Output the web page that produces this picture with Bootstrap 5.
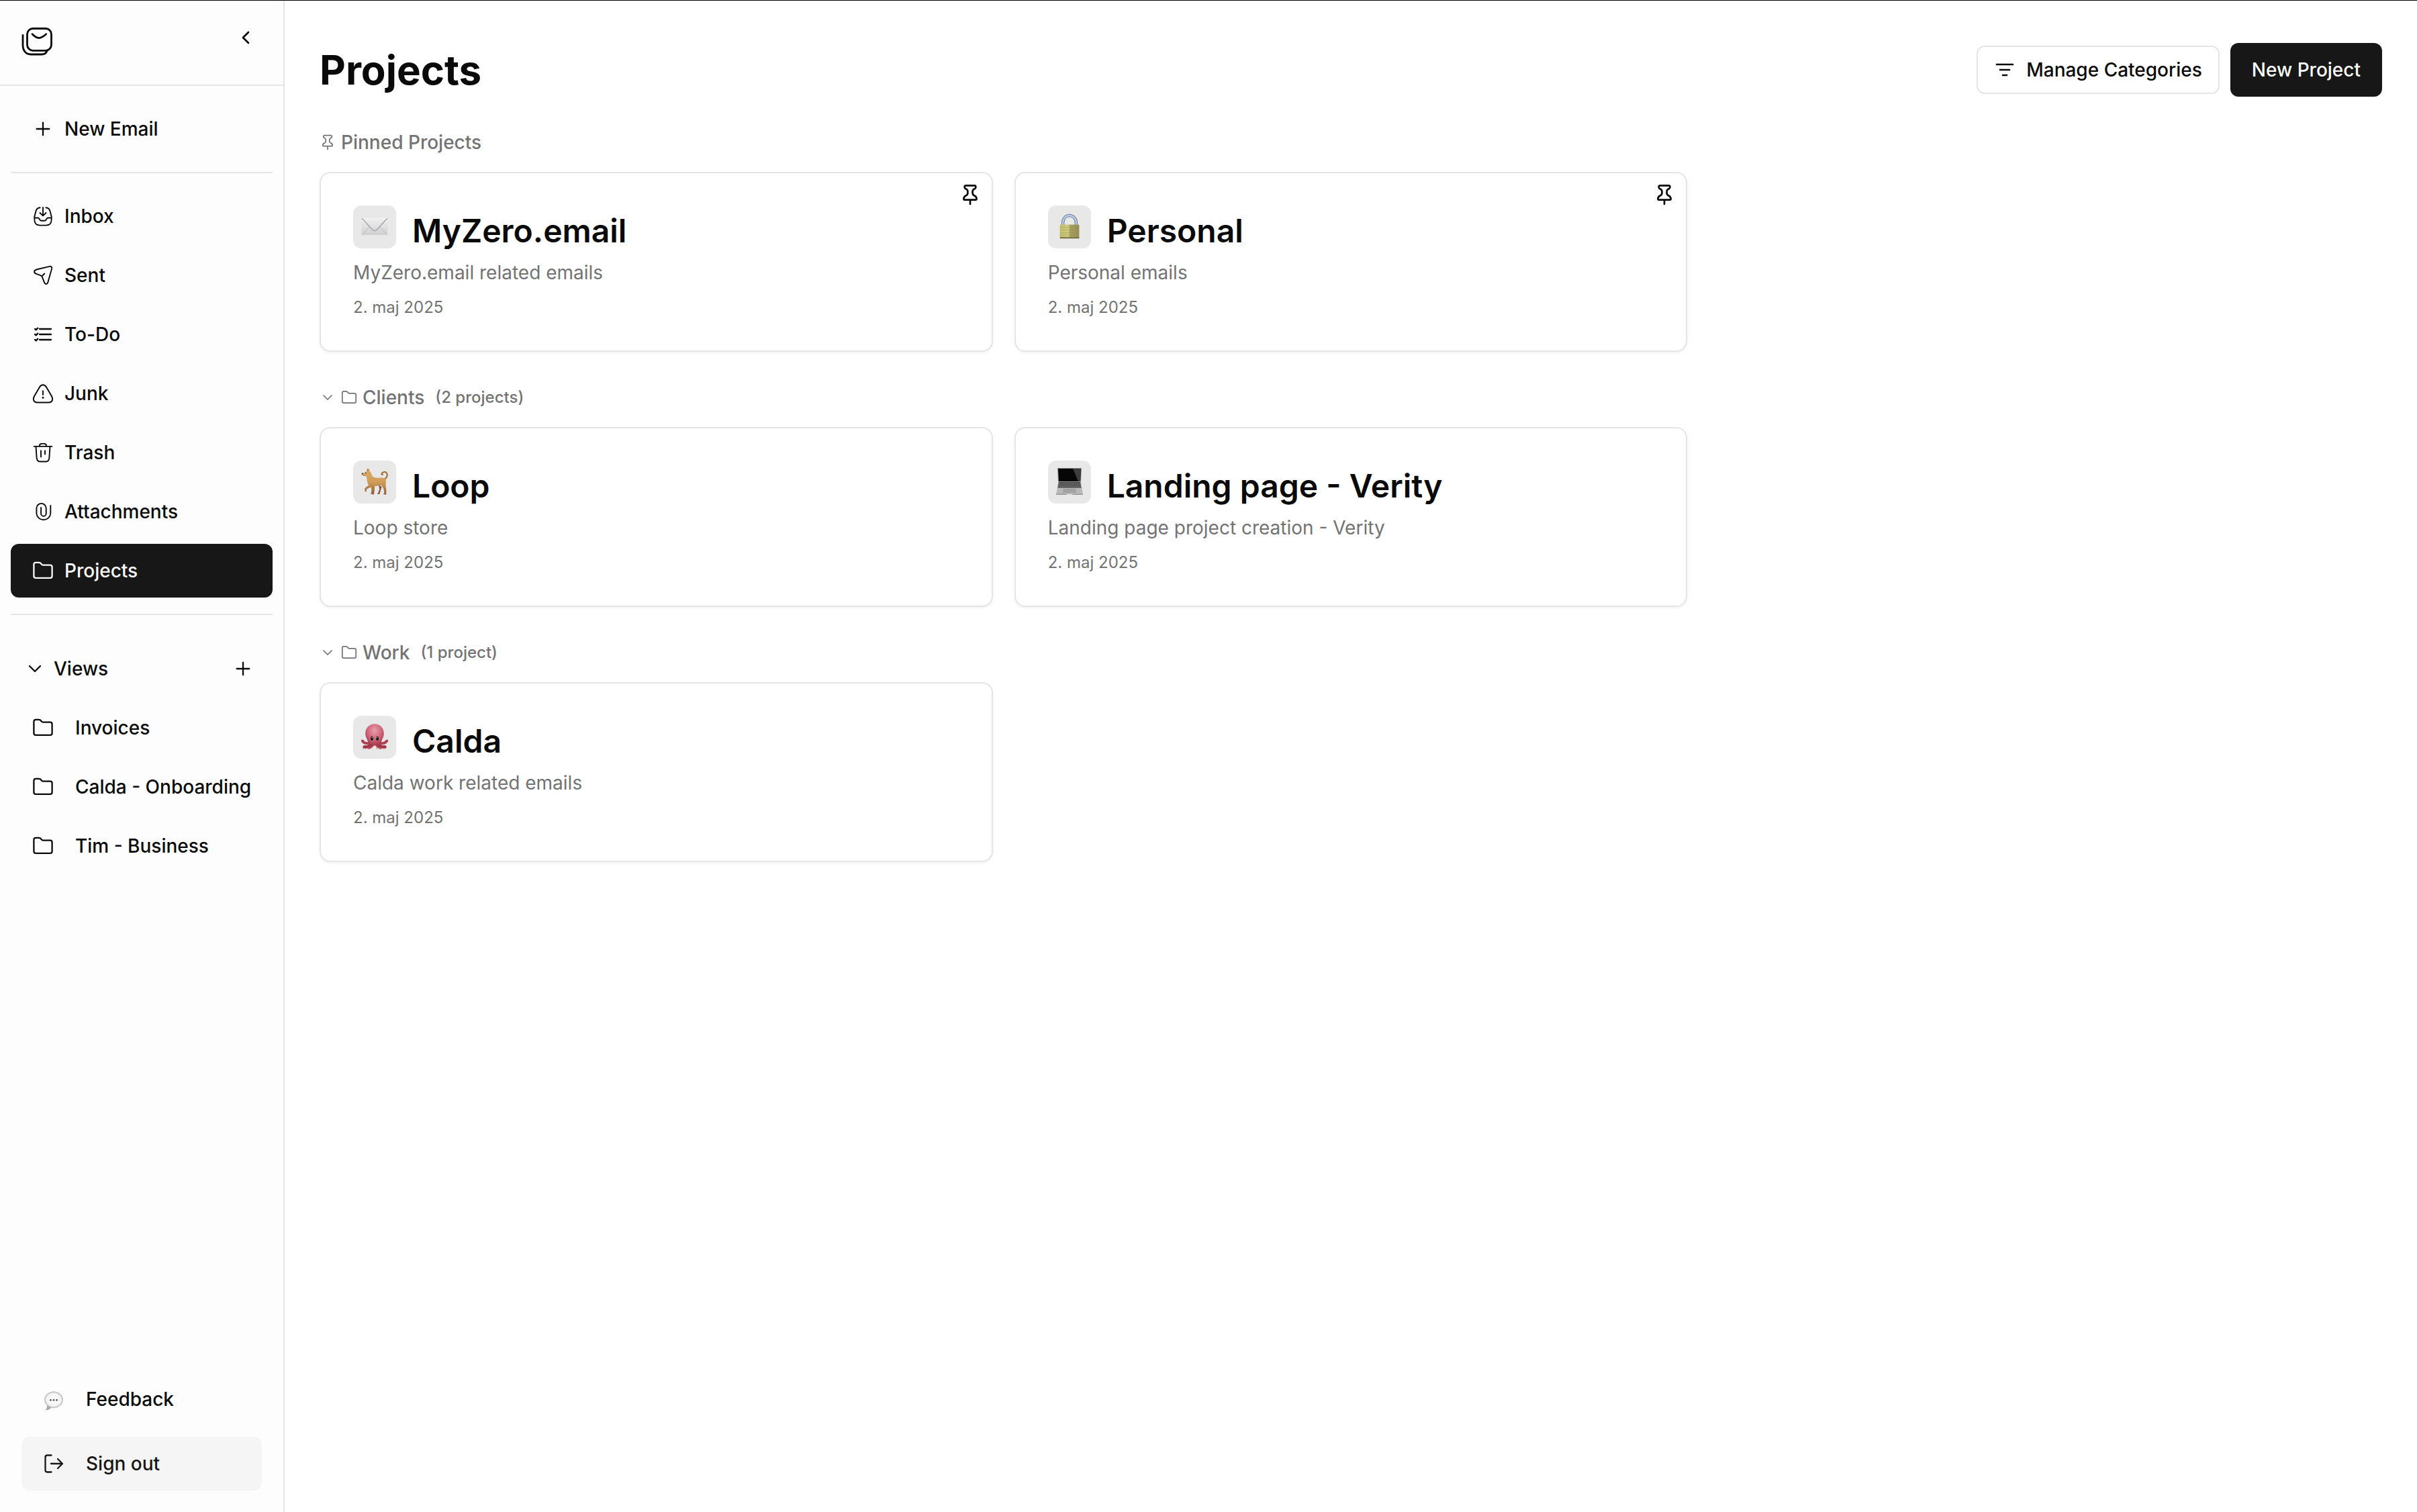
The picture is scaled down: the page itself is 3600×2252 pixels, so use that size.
<!DOCTYPE html>
<html lang="en">
<head>
<meta charset="utf-8">
<meta name="viewport" content="width=device-width, initial-scale=1">
<title>Projects</title>
<link href="https://cdn.jsdelivr.net/npm/bootstrap@5.3.0/dist/css/bootstrap.min.css" rel="stylesheet">
<style>
  :root { --ink: #0a0a0a; --muted: #737373; --line: #e5e5e5; --solid: #171717; }
  body { font-family: Inter, "Noto Sans", sans-serif; font-size: 28px; line-height: 40px; color: var(--ink); background: #fff; }
  svg { flex: none; display: block; overflow: visible; }
  .ico { width: 32px; height: 32px; fill: none; stroke: currentColor; stroke-width: 2.3; stroke-linecap: round; stroke-linejoin: round; }
  .ico-fine { stroke-width: 1.9; }
  .ico-bold { stroke-width: 2.7; }
  .ico-small { width: 24px; height: 24px; }
  .app-shell { border-top: 1px solid #000; }
  .side-pane { width: 424px; background: #fdfdfd; border-right: 2px solid var(--line); }
  .side-head { height: 127px; padding: 32px 40px 32px 32px; border-bottom: 2px solid var(--line); }
  .side-head button { margin-top: 7px; }
  .side-body { padding: 24px 16px; }
  .side-rule { height: 2px; margin: 24px 0; background: var(--line); }
  .side-list { gap: 8px; }
  .side-item { display: flex; align-items: center; gap: 16px; width: 100%; height: 80px; padding: 0 32px; border: 0; border-radius: 12px; background: none; color: var(--ink); font-weight: 500; text-decoration: none; white-space: nowrap; text-align: left; }
  .side-item.active { background: var(--solid); color: #fafafa; }
  .views-head { height: 80px; margin-top: 40px; padding: 0 28px 0 20px; font-weight: 500; }
  .view-item { gap: 32px; }
  .plain-btn { display: flex; align-items: center; gap: 12px; padding: 0; border: 0; background: none; color: inherit; font-weight: 500; }
  .side-foot { padding: 32px; gap: 16px; }
  .side-foot .side-item { gap: 32px; }
  .side-out { background: #f5f5f5; color: var(--solid); }
  .content-pane { padding: 63px 52px; }
  .page-title { font-size: 60px; line-height: 80px; font-weight: 700; }
  .btn-outline-plain, .btn-solid { display: flex; align-items: center; gap: 16px; font-size: 28px; font-weight: 500; line-height: 40px; border-radius: 12px; }
  .btn-outline-plain { height: 72px; padding: 0 24px; border: 2px solid var(--line); background: #fff; color: var(--ink); }
  .btn-solid { height: 80px; padding: 0 32px; border: 0; background: var(--solid); color: #fafafa; }
  .btn-solid:hover { background: #333; color: #fafafa; }
  .group-block { margin-top: 48px; }
  .group-head { gap: 8px; margin-bottom: 24px; font-size: 28px; line-height: 40px; font-weight: 500; color: var(--muted); }
  .group-head button { gap: 8px; }
  .group-count { margin-left: 8px; font-size: 24px; }
  .card-row { --bs-gutter-x: 32px; --bs-gutter-y: 32px; }
  .project-card { padding: 48px; border: 2px solid var(--line); border-radius: 16px; color: var(--ink); box-shadow: 0 2px 4px rgba(0,0,0,.05); }
  .project-head { gap: 24px; margin-bottom: 4px; }
  .emoji-tile { width: 64px; height: 64px; border-radius: 12px; background: #e8e8e8; }
  .project-name { margin: 0; font-size: 48px; line-height: 76px; font-weight: 600; }
  .project-note { margin: 0 0 16px; color: var(--muted); }
  .project-date { font-size: 24px; line-height: 32px; color: var(--muted); }
  .pin-btn { top: 16px; right: 16px; }
</style>
</head>
<body>
<svg width="0" height="0" class="position-absolute" aria-hidden="true">
  <defs>
    <symbol id="plus" viewBox="0 0 32 32"><path d="M6.7 16h18.6M16 6.700v18.600"/></symbol>
    <symbol id="down" viewBox="0 0 32 32"><path d="M8 12l8 8 8-8"/></symbol>
    <symbol id="folder" viewBox="0 0 32 32"><path d="M2.400 6.700Q2.400 3.800 5.300 3.800H9.700C11.400 3.800 12.400 4.300 13.200 5.600C14 7 14.900 7.700 16.400 7.700H26.700Q29.600 7.700 29.600 10.600V24Q29.600 26.900 26.700 26.900H5.300Q2.400 26.900 2.400 24Z"/></symbol>
    <symbol id="pin" viewBox="0 0 32 32"><path d="M9.600 2.300H22.400Q24.300 2.300 24.300 4.200V5Q24.300 6.600 22.700 7.200Q19.600 8.300 19.600 11V13.500Q19.600 16 22 17.200Q25.600 18.800 25.600 22.200Q25.600 23.600 24.200 23.600H7.800Q6.400 23.600 6.400 22.200Q6.400 18.800 10 17.200Q12.400 16 12.400 13.500V11Q12.400 8.300 9.300 7.200Q7.700 6.600 7.700 5V4.200Q7.700 2.300 9.600 2.300ZM16 23.600V30"/></symbol>
    <linearGradient id="paper" x1="0" y1="0" x2="0" y2="1"><stop offset="0" stop-color="#f1f1f1"/><stop offset="1" stop-color="#cfcfcf"/></linearGradient>
    <linearGradient id="brass" x1="0" y1="0" x2="1" y2="0"><stop offset="0" stop-color="#c3bb6c"/><stop offset=".45" stop-color="#cfc880"/><stop offset=".52" stop-color="#a9a062"/><stop offset="1" stop-color="#979056"/></linearGradient>
    <linearGradient id="fur" x1="0" y1="0" x2="0" y2="1"><stop offset="0" stop-color="#dcae68"/><stop offset=".55" stop-color="#cf9c58"/><stop offset="1" stop-color="#8f5a35"/></linearGradient>
    <radialGradient id="skin" cx=".5" cy=".3" r=".7"><stop offset="0" stop-color="#eaa0ae"/><stop offset=".6" stop-color="#cc5f73"/><stop offset="1" stop-color="#a33a4c"/></radialGradient>
    <radialGradient id="bubble" cx=".5" cy=".5" r=".55"><stop offset="0" stop-color="#fff"/><stop offset=".7" stop-color="#f4f4f4"/><stop offset="1" stop-color="#aaa"/></radialGradient>
  </defs>
</svg>

<div class="app-shell d-flex min-vh-100">
  <aside class="side-pane d-flex flex-column flex-shrink-0">
    <header class="side-head d-flex justify-content-between align-items-start">
      <a href="#" class="text-reset" aria-label="Home">
        <svg width="48" height="56" viewBox="32 33 48 56" fill="none" stroke="#0a0a0a" stroke-width="2.800" stroke-linecap="round"><rect x="40.500" y="42.500" width="36" height="32.800" rx="8.500"/><path d="M34 52.500V67C34 75.500 38.500 81 46 81H62C66.500 81 69 79 70.200 75.500M48 50.800C55.500 58.500 60.500 58.500 68.700 50.800"/></svg>
      </a>
      <button class="plain-btn" type="button" aria-label="Collapse sidebar"><svg class="ico ico-bold" viewBox="0 0 32 32"><path d="M20 8l-8 8 8 8"/></svg></button>
    </header>

    <div class="side-body">
      <button class="side-item" type="button"><svg class="ico"><use href="#plus"/></svg>New Email</button>
      <div class="side-rule"></div>
      <nav class="side-list d-flex flex-column">
        <a class="side-item" href="#"><svg class="ico ico-fine" viewBox="0 0 32 32"><path d="M11.600 3.300C7.800 3.500 6.100 5.500 5.300 9L3.300 16.800V20.500C3.300 27 5.500 29.600 11.500 29.600H20.500C26.500 29.600 28.700 27 28.700 20.500V16.800L26.700 9C25.900 5.500 24.200 3.500 20.400 3.300M16 3V15M11.500 11L16 15.400L20.500 11M3.400 18.500H8.300C9.500 18.500 10 19 10.500 19.900L11.300 21.300C11.900 22.400 12.600 22.800 13.800 22.800H18.200C19.400 22.800 20.100 22.400 20.700 21.300L21.500 19.900C22 19 22.500 18.500 23.700 18.500H28.600"/></svg>Inbox</a>
        <a class="side-item" href="#"><svg class="ico ico-fine" viewBox="0 0 32 32"><path d="M25.600 2.900L7.200 7.200C2.100 8.500 1.700 12 6 13.900L12.300 16.100C13.900 16.700 14.300 17.200 14.900 18.700L17.800 26.200C19.300 30 22.300 30.200 23.500 26L29.100 6.200C29.700 3.700 28.200 2.300 25.600 2.900ZM14.800 17L18.300 13.500"/></svg>Sent</a>
        <a class="side-item" href="#"><svg class="ico" viewBox="0 0 32 32"><path d="M11 8H28M11 16H28M11 24H28M4 7.900L5.600 9.300L8.300 6.700M4 15.900L5.600 17.300L8.300 14.700M4 23.900L5.600 25.300L8.300 22.700"/></svg>To-Do</a>
        <a class="side-item" href="#"><svg class="ico ico-fine" viewBox="0 0 32 32"><path d="M16 3.200C18 3.200 19.700 4.300 21 6.500L28.900 20C31.800 25.300 29.600 29.500 24 29.500H8C2.400 29.500 .2 25.300 3.100 20L11 6.500C12.300 4.300 14 3.200 16 3.200ZM16 12.300V18"/><path d="M16 22.200h.01" stroke-width="3"/></svg>Junk</a>
        <a class="side-item" href="#"><svg class="ico ico-fine" viewBox="0 0 32 32"><path d="M2.700 6.900H29.300M11 6.700V6C11 3.500 12 2.900 14 2.900H18C20 2.900 21 3.500 21 6V6.700M5.500 7L6.600 23.500C7 28 8.300 29.500 11.500 29.500H20.500C23.700 29.500 25 28 25.400 23.500L26.500 7M13 13.200V22.500M19 13.200V18.500"/></svg>Trash</a>
        <a class="side-item" href="#"><svg class="ico ico-fine" viewBox="0 0 32 32"><path d="M27.300 7V19A10.500 10.300 0 0 1 6.400 19V10.500A7.200 7.500 0 0 1 20.700 10.500V19A3.800 3.800 0 0 1 13.100 19V10"/></svg>Attachments</a>
        <a class="side-item active" href="#" aria-current="page"><svg class="ico"><use href="#folder"/></svg>Projects</a>
      </nav>
      <div class="side-rule"></div>
      <div class="views-head d-flex align-items-center justify-content-between">
        <button class="plain-btn" type="button" aria-expanded="true"><svg class="ico"><use href="#down"/></svg>Views</button>
        <button class="plain-btn" type="button" aria-label="Add view"><svg class="ico"><use href="#plus"/></svg></button>
      </div>
      <nav class="side-list d-flex flex-column pt-2">
        <a class="side-item view-item" href="#"><svg class="ico"><use href="#folder"/></svg>Invoices</a>
        <a class="side-item view-item" href="#"><svg class="ico"><use href="#folder"/></svg>Calda - Onboarding</a>
        <a class="side-item view-item" href="#"><svg class="ico"><use href="#folder"/></svg>Tim - Business</a>
      </nav>
    </div>

    <div class="side-foot d-flex flex-column mt-auto">
      <button class="side-item" type="button"><svg width="32" height="32" viewBox="0 0 32 32"><path d="M6 25Q6.500 30 3.500 32.500Q10 32 13.500 27Z" fill="#a5a5a5"/><ellipse cx="16" cy="16.800" rx="13.700" ry="12" fill="url(#bubble)" stroke="#b5b5b5" stroke-width=".7"/><g fill="#333"><circle cx="11.500" cy="17.300" r="1.200"/><circle cx="16" cy="17.300" r="1.200"/><circle cx="20.500" cy="17.300" r="1.200"/></g></svg>Feedback</button>
      <button class="side-item side-out" type="button"><svg class="ico" viewBox="0 0 32 32"><path d="M12.500 3.500H6.500Q3.500 3.500 3.500 6.500V25.500Q3.500 28.500 6.500 28.500H12.500M12 16H28.500M22 9L29 16L22 23"/></svg>Sign out</button>
    </div>
  </aside>

  <main class="content-pane flex-grow-1">
    <div class="d-flex justify-content-between align-items-center">
      <h1 class="page-title mb-0">Projects</h1>
      <div class="d-flex align-items-center gap-3">
        <button class="btn btn-outline-plain" type="button"><svg class="ico ico-bold" viewBox="0 0 32 32"><path d="M4 8H28M9 16H23M13 24H19"/></svg>Manage Categories</button>
        <button class="btn btn-solid" type="button">New Project</button>
      </div>
    </div>

    <section class="group-block">
      <h2 class="group-head d-flex align-items-center"><svg class="ico ico-small"><use href="#pin"/></svg>Pinned Projects</h2>
      <div class="row row-cols-1 row-cols-lg-3 card-row">
        <div class="col">
          <article class="card project-card">
            <button class="plain-btn pin-btn position-absolute" type="button" aria-label="Unpin MyZero.email"><svg class="ico ico-bold"><use href="#pin"/></svg></button>
            <div class="project-head d-flex align-items-start">
              <svg class="emoji-tile" viewBox="0 0 64 64"><rect x="12.700" y="18.500" width="38.600" height="25.500" rx="1" fill="url(#paper)"/><path d="M13.300 43.500L24.500 31.500M50.700 43.500L39.500 31.500" stroke="#b9b9b9" fill="none"/><path d="M13 19L28 35.500Q32 40 36 35.500L51 19" fill="none" stroke="#a2a4ab" stroke-width="1.300"/></svg>
              <h3 class="project-name">MyZero.email</h3>
            </div>
            <p class="project-note">MyZero.email related emails</p>
            <time class="project-date" datetime="2025-05-02">2. maj 2025</time>
          </article>
        </div>
        <div class="col">
          <article class="card project-card">
            <button class="plain-btn pin-btn position-absolute" type="button" aria-label="Unpin Personal"><svg class="ico ico-bold"><use href="#pin"/></svg></button>
            <div class="project-head d-flex align-items-start">
              <svg class="emoji-tile" viewBox="0 0 64 64"><path d="M22.200 30V25.500A9.800 10.500 0 0 1 41.800 25.500V30" fill="none" stroke="#6f7a8c" stroke-width="4.400"/><path d="M22.200 30V25.500A9.800 10.500 0 0 1 41.800 25.500V30" fill="none" stroke="#b8cdf0" stroke-width="2.400"/><rect x="17.600" y="28.500" width="28.800" height="20.600" rx="1" fill="url(#brass)"/><path d="M18 32.500H46M18 36.500H46M18 40.500H46M18 44H46" stroke="#8d8648" stroke-width=".5" opacity=".5"/><path d="M17.600 47.300H46.400V48.600Q46.400 49.300 45.400 49.300H18.600Q17.600 49.300 17.600 48.600Z" fill="#77703f"/></svg>
              <h3 class="project-name">Personal</h3>
            </div>
            <p class="project-note">Personal emails</p>
            <time class="project-date" datetime="2025-05-02">2. maj 2025</time>
          </article>
        </div>
      </div>
    </section>

    <section class="group-block">
      <h2 class="group-head d-flex align-items-center"><button class="plain-btn" type="button" aria-expanded="true"><svg class="ico ico-small"><use href="#down"/></svg><svg class="ico ico-small"><use href="#folder"/></svg>Clients</button><span class="group-count">(2 projects)</span></h2>
      <div class="row row-cols-1 row-cols-lg-3 card-row">
        <div class="col">
          <article class="card project-card">
            <div class="project-head d-flex align-items-start">
              <svg class="emoji-tile" viewBox="0 0 64 64"><path d="M46.500 28C50.500 25.500 51.800 21.500 50 18.700C48.300 16.200 44 16.400 42.600 19.300C42.200 20.500 43 21.300 44 20.800" fill="none" stroke="#a8713d" stroke-width="2.200" stroke-linecap="round"/><path d="M28 36L27.200 47.800L25.600 49.600H29L31.500 37ZM38 36L39.200 42.500L37.300 48L35.600 49.900H39.200L42.600 39Z" fill="#875336"/><path d="M21.400 11.200L20.200 15.800C19 16.600 17.800 17.900 16.500 18.200L12.600 19C12.300 20.300 12.800 21.700 14.200 22L18.300 22.800C20 23.500 20.400 26 20.600 28.500C20.900 32 21.800 34.500 23.200 36.400L18.300 40.300C17.100 41.300 17 42.200 17.300 43.400L17.900 46.200L20.200 45.800L19.700 42.800L26.300 39.600C27.800 42 28.300 46 28.200 50.500H30.900C31.800 45.500 32 41 32.400 37.400C35.800 38 39.300 37.400 41.600 36.300C44.600 39.300 46.300 43.500 46.400 48L45 50.500H49.300C49.700 45.500 49 41.500 48.400 37C48.800 33.500 49.400 29.500 48.300 27.400C47 25.100 42.500 25.300 38 25.700C33.500 26 30.300 25.300 28.600 23C27.100 20.700 27.300 17 24 15.600L23.200 11.200L22.200 14Z" fill="url(#fur)"/><path d="M21.500 12.500L21 15.700M23.100 12.500L23.600 15.300" stroke="#9d4f48" stroke-width=".9"/><path d="M12.500 18.800L15 18.400Q15 20.200 13 20.500Z" fill="#30211e"/><circle cx="18.900" cy="18.300" r=".8" fill="#30211e"/><path d="M14 21.500Q16.500 22.500 18.300 21.800" fill="none" stroke="#744a32" stroke-width=".7"/></svg>
              <h3 class="project-name">Loop</h3>
            </div>
            <p class="project-note">Loop store</p>
            <time class="project-date" datetime="2025-05-02">2. maj 2025</time>
          </article>
        </div>
        <div class="col">
          <article class="card project-card">
            <div class="project-head d-flex align-items-start">
              <svg class="emoji-tile" viewBox="0 0 64 64"><path d="M14 11H50L49 32H15Z" fill="#8d8d8d"/><path d="M15 12H49L48 31H16Z" fill="#060606"/><path d="M37 12H49L48 31H45Z" fill="#3d3d3d"/><path d="M15.300 31.500H48.700L52 50.500H12Z" fill="#b9b9b9"/><path d="M16 32H48L49.600 40.500H14.400Z" fill="#444"/><path d="M16 34.300H48.500M15.500 36.500H49M15 38.700H49.400" stroke="#a9a9a9" stroke-width=".7" stroke-dasharray="2 .7"/><path d="M22.800 41.800H41.200L42 48H22Z" fill="#a2a2a2"/><path d="M12 49.800H52V50.800H12Z" fill="#838383"/><path d="M27 49.800H37L36 51H28Z" fill="#ddd"/></svg>
              <h3 class="project-name">Landing page - Verity</h3>
            </div>
            <p class="project-note">Landing page project creation - Verity</p>
            <time class="project-date" datetime="2025-05-02">2. maj 2025</time>
          </article>
        </div>
      </div>
    </section>

    <section class="group-block">
      <h2 class="group-head d-flex align-items-center"><button class="plain-btn" type="button" aria-expanded="true"><svg class="ico ico-small"><use href="#down"/></svg><svg class="ico ico-small"><use href="#folder"/></svg>Work</button><span class="group-count">(1 project)</span></h2>
      <div class="row row-cols-1 row-cols-lg-3 card-row">
        <div class="col">
          <article class="card project-card">
            <div class="project-head d-flex align-items-start">
              <svg class="emoji-tile" viewBox="0 0 64 64"><g fill="none" stroke-linecap="round"><path d="M24 41Q17 42 13.800 37.500M40 41Q47 42 50.200 37.500" stroke="#b04255" stroke-width="4"/><path d="M28 42Q23 47 16.500 46.500M36 42Q41 47 47.500 46.500" stroke="#9c3445" stroke-width="4.500"/><path d="M29.500 43Q28 47 23 48M34.500 43Q36 47 41 48" stroke="#b43e50" stroke-width="3.500"/><path d="M15 49H29M35 49H49" stroke="#d98691" stroke-width="1.500" stroke-dasharray=".5 3"/></g><path d="M32 12.300C40.500 12.300 45.800 19 45.800 26.500C45.800 31.500 43.500 34 42.500 37.500C41.500 42 37.500 44.500 32 44.500C26.500 44.500 22.500 42 21.500 37.500C20.500 34 18.200 31.500 18.200 26.500C18.200 19 23.500 12.300 32 12.300Z" fill="url(#skin)"/><g fill="#d77f8c"><ellipse cx="27.900" cy="33.800" rx="3" ry="4.200"/><ellipse cx="36.100" cy="33.800" rx="3" ry="4.200"/></g><g fill="#1a1215"><ellipse cx="27.900" cy="34" rx="2" ry="3.200"/><ellipse cx="36.100" cy="34" rx="2" ry="3.200"/></g><g fill="#ddd"><circle cx="28.300" cy="32.800" r=".8"/><circle cx="35.700" cy="32.800" r=".8"/></g></svg>
              <h3 class="project-name">Calda</h3>
            </div>
            <p class="project-note">Calda work related emails</p>
            <time class="project-date" datetime="2025-05-02">2. maj 2025</time>
          </article>
        </div>
      </div>
    </section>
  </main>
</div>
<script src="https://cdn.jsdelivr.net/npm/bootstrap@5.3.0/dist/js/bootstrap.bundle.min.js"></script>
</body>
</html>
